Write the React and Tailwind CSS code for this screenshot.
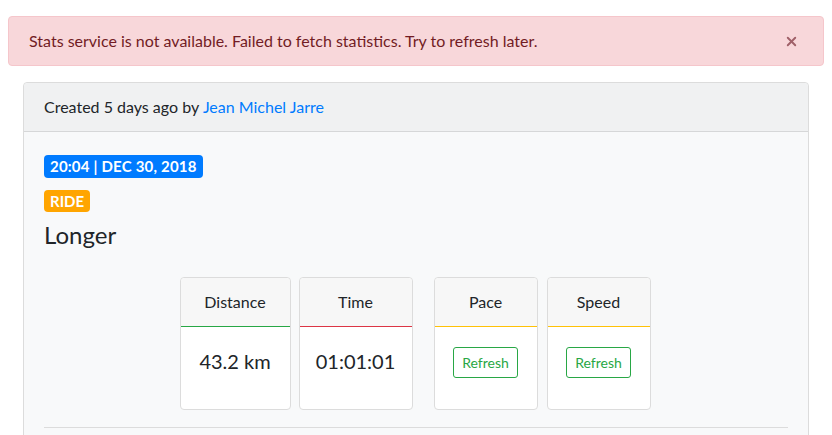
import { X } from 'lucide-react'

const STATS = [
  { title: 'Distance', value: '43.2 km', line: 'border-[#28a745]', w: 'w-[111px]' },
  { title: 'Time', value: '01:01:01', line: 'border-[#dc3545]', w: 'w-[114px]' },
]

const PENDING = [
  { title: 'Pace', line: 'border-[#ffc107]' },
  { title: 'Speed', line: 'border-[#ffc107]' },
]

function StatCard({ title, line, w, children }) {
  return (
    <div className={`${w} h-[133px] bg-white border border-[#dcdcdc] rounded-[4px] flex flex-col`}>
      <div className={`h-[49px] bg-[#f7f7f7] border-b ${line} flex items-center justify-center text-[16px] text-[#212529] rounded-t-[4px]`}>
        {title}
      </div>
      <div className="flex-1 flex items-center justify-center pb-[15px]">{children}</div>
    </div>
  )
}

export default function App() {
  return (
    <div className="min-h-[435px] bg-white pt-4 px-2 font-['Lato','Liberation_Sans',sans-serif] text-[#212529]">
      {/* Alert */}
      <div className="h-[50px] bg-[#f8d7da] border border-[#f5c6cb] rounded-[4px] text-[#721c24] text-[16px] flex items-center justify-between pl-5 pr-6">
        <span>Stats service is not available. Failed to fetch statistics. Try to refresh later.</span>
        <X size={15} strokeWidth={3} className="text-[#a06068] mt-[1px]" />
      </div>

      {/* Card */}
      <div className="mx-[15px] mt-4 border border-[#dcdcdc] rounded-t-[4px] bg-[#f8f9fa] h-[360px]">
        <div className="h-[49px] bg-[#f0f1f2] border-b border-[#d6d7d8] flex items-center px-5 text-[16px] rounded-t-[4px]">
          Created 5 days ago by&nbsp;<span className="text-[#007bff]">Jean Michel Jarre</span>
        </div>
        <div className="px-5 pt-[22px]">
          <span className="inline-block bg-[#007bff] text-white font-bold text-[15px] leading-[23px] px-[6px] rounded-[4px] tracking-[0.2px]">
            20:04 | DEC 30, 2018
          </span>
          <div className="mt-[11px]">
            <span className="inline-block bg-[#ffa500] text-white font-bold text-[15px] leading-[22px] px-[6px] rounded-[4px]">
              RIDE
            </span>
          </div>
          <div className="text-[24px] leading-[30px] mt-[7px]">Longer</div>

          <div className="flex justify-center mt-[27px] gap-[21px] pr-[2px]">
            <div className="flex gap-2">
              {STATS.map(s => (
                <StatCard key={s.title} {...s}>
                  <span className="text-[20px]">{s.value}</span>
                </StatCard>
              ))}
            </div>
            <div className="flex gap-[9px]">
              {PENDING.map(s => (
                <StatCard key={s.title} {...s} w="w-[104px]">
                  <button className="border border-[#28a745] text-[#28a745] text-[14px] rounded-[3px] h-[31px] px-[8px] mt-[4px]">
                    Refresh
                  </button>
                </StatCard>
              ))}
            </div>
          </div>
          <div className="mt-[17px] border-t border-[#dcdcdc]" />
        </div>
      </div>
    </div>
  )
}
